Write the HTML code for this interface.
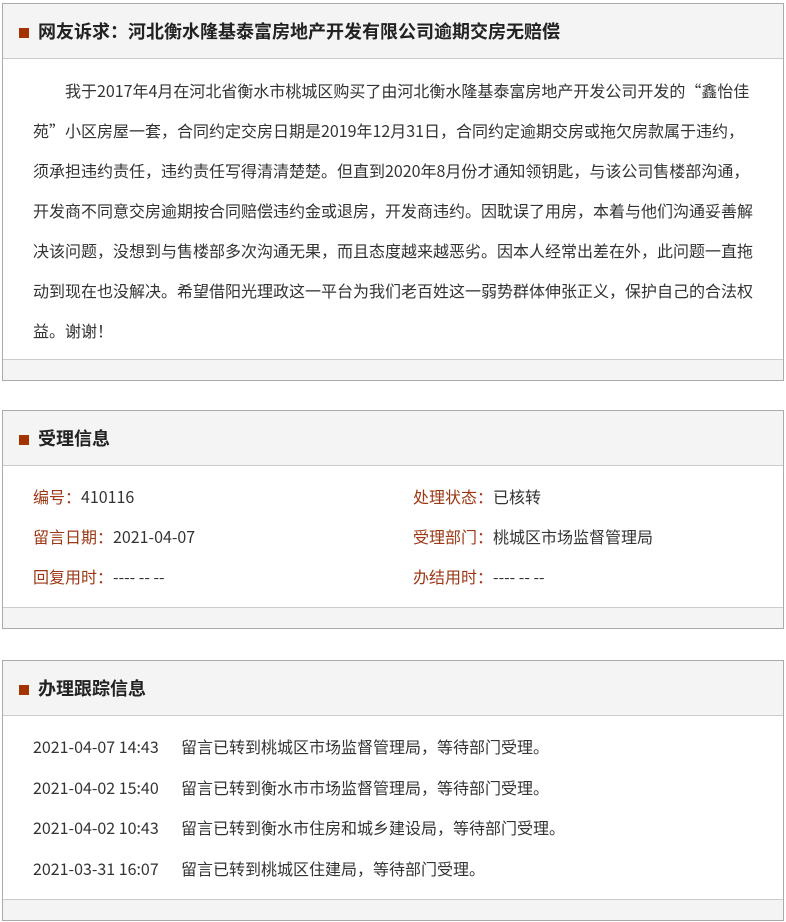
<!DOCTYPE html>
<html><head><meta charset="utf-8"><style>
*{margin:0;padding:0;box-sizing:border-box}
body{width:786px;height:922px;background:#fff;font-family:"Noto Sans CJK SC","Liberation Sans",sans-serif;color:#333;font-size:16px;position:relative}
.box{position:absolute;left:2px;width:782px;border:1px solid #aaa;background:#fff}
.hd{height:55px;background:#f4f4f4;border-bottom:1px solid #ccc;position:relative}
.hd i{position:absolute;left:16px;top:24px;width:10px;height:10px;background:#a33400}
.hd b{position:absolute;left:35px;top:15px;font-size:18px;color:#222;font-weight:bold;line-height:24px}
.ft{height:21px;background:#f4f4f4;border-top:1px solid #ccc}
.txt{padding:11px 30px 5px 30px;line-height:40px;text-indent:2em}
.row{height:40px;line-height:40px;position:relative;padding-left:30px}
.row span{position:absolute;top:0}
.l{color:#9c3814}
.tr{padding:10px 30px 10px 30px}
.tr div{height:40.5px;line-height:40px}
.tr em{font-style:normal;display:inline-block;width:148px}
</style></head><body>
<div class="box" style="top:3px;height:378px">
<div class="hd"><i></i><b>网友诉求：河北衡水隆基泰富房地产开发有限公司逾期交房无赔偿</b></div>
<div class="txt" style="height:300px">我于2017年4月在河北省衡水市桃城区购买了由河北衡水隆基泰富房地产开发公司开发的“鑫怡佳苑”小区房屋一套，合同约定交房日期是2019年12月31日，合同约定逾期交房或拖欠房款属于违约，须承担违约责任，违约责任写得清清楚楚。但直到2020年8月份才通知领钥匙，与该公司售楼部沟通，开发商不同意交房逾期按合同赔偿违约金或退房，开发商违约。因耽误了用房，本着与他们沟通妥善解决该问题，没想到与售楼部多次沟通无果，而且态度越来越恶劣。因本人经常出差在外，此问题一直拖动到现在也没解决。希望借阳光理政这一平台为我们老百姓这一弱势群体伸张正义，保护自己的合法权益。谢谢！</div>
<div class="ft"></div>
</div>
<div class="box" style="top:410px;height:219px">
<div class="hd"><i></i><b>受理信息</b></div>
<div style="padding-top:10px;height:141px">
<div class="row"><span style="left:30px"><span class="l" style="position:static">编号：</span>410116</span><span style="left:410px"><span class="l" style="position:static">处理状态：</span>已核转</span></div>
<div class="row"><span style="left:30px"><span class="l" style="position:static">留言日期：</span>2021-04-07</span><span style="left:410px"><span class="l" style="position:static">受理部门：</span>桃城区市场监督管理局</span></div>
<div class="row"><span style="left:30px"><span class="l" style="position:static">回复用时：</span>---- -- --</span><span style="left:410px"><span class="l" style="position:static">办结用时：</span>---- -- --</span></div>
</div>
<div class="ft"></div>
</div>
<div class="box" style="top:660px;height:261px">
<div class="hd"><i></i><b>办理跟踪信息</b></div>
<div class="tr" style="height:183px">
<div><em>2021-04-07 14:43</em>留言已转到桃城区市场监督管理局，等待部门受理。</div>
<div><em>2021-04-02 15:40</em>留言已转到衡水市市场监督管理局，等待部门受理。</div>
<div><em>2021-04-02 10:43</em>留言已转到衡水市住房和城乡建设局，等待部门受理。</div>
<div><em>2021-03-31 16:07</em>留言已转到桃城区住建局，等待部门受理。</div>
</div>
<div class="ft"></div>
</div>
</body></html>
